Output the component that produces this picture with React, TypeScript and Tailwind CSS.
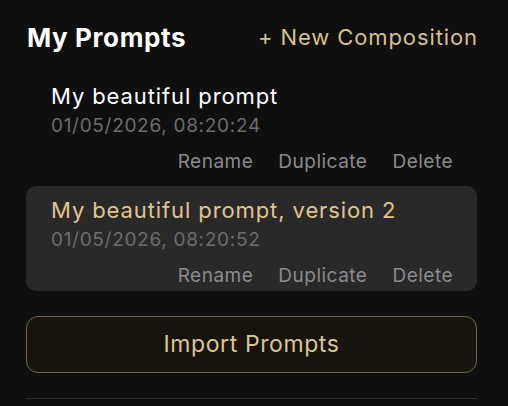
import { useState } from 'react';

const prompts = [
    { id: 1, name: 'My beautiful prompt', date: '01/05/2026, 08:20:24' },
    { id: 2, name: 'My beautiful prompt, version 2', date: '01/05/2026, 08:20:52' },
];

export default function App() {
    const [selected] = useState(2);

    return (
        <div className="min-h-screen w-full bg-[#0f0f10] font-['Inter',sans-serif]">
            <div className="w-[451px] ml-[26px] pt-[21px]">
                {/* Header */}
                <div className="flex items-center justify-between h-[32px] pl-[1px]">
                    <h1 className="text-[26px] font-bold text-white tracking-[0.6px]">My Prompts</h1>
                    <button className="text-[22px] text-[#d6bf89] tracking-[0.9px] -mr-[1px]">+ New Composition</button>
                </div>

                {/* Prompt list */}
                <div className="mt-[19px] flex flex-col gap-[9px]">
                    {prompts.map((p) => {
                        const active = p.id === selected;
                        return (
                            <div
                                key={p.id}
                                className={
                                    active
                                        ? 'rounded-[10px] bg-[#29292a] pl-[25px] pr-[24px] pt-[10px] pb-[3px]'
                                        : 'rounded-[10px] pl-[25px] pr-[24px] pt-[10px] pb-[3px]'
                                }
                            >
                                <div
                                    className={
                                        active
                                            ? 'text-[22px] leading-[28px] tracking-[0.9px] text-[#e2c58d]'
                                            : 'text-[22px] leading-[28px] tracking-[0.9px] text-white'
                                    }
                                >
                                    {p.name}
                                </div>
                                <div className="mt-[4px] text-[19px] leading-[24px] tracking-[0.7px] text-[#6c6c6e]">{p.date}</div>
                                <div className="mt-[12px] flex justify-end gap-[25px] text-[19px] leading-[24px] tracking-[0.5px] text-[#8b8b8d]">
                                    <button>Rename</button>
                                    <button>Duplicate</button>
                                    <button>Delete</button>
                                </div>
                            </div>
                        );
                    })}
                </div>

                {/* Import */}
                <button className="mt-[25px] w-full h-[57px] rounded-[12px] border border-[#6f6546] bg-[#17130d] text-[23px] tracking-[0.6px] text-[#dcc68f]">
                    Import Prompts
                </button>

                <div className="mt-[25px] h-px bg-[#2e2e30]" />
            </div>
        </div>
    );
}
